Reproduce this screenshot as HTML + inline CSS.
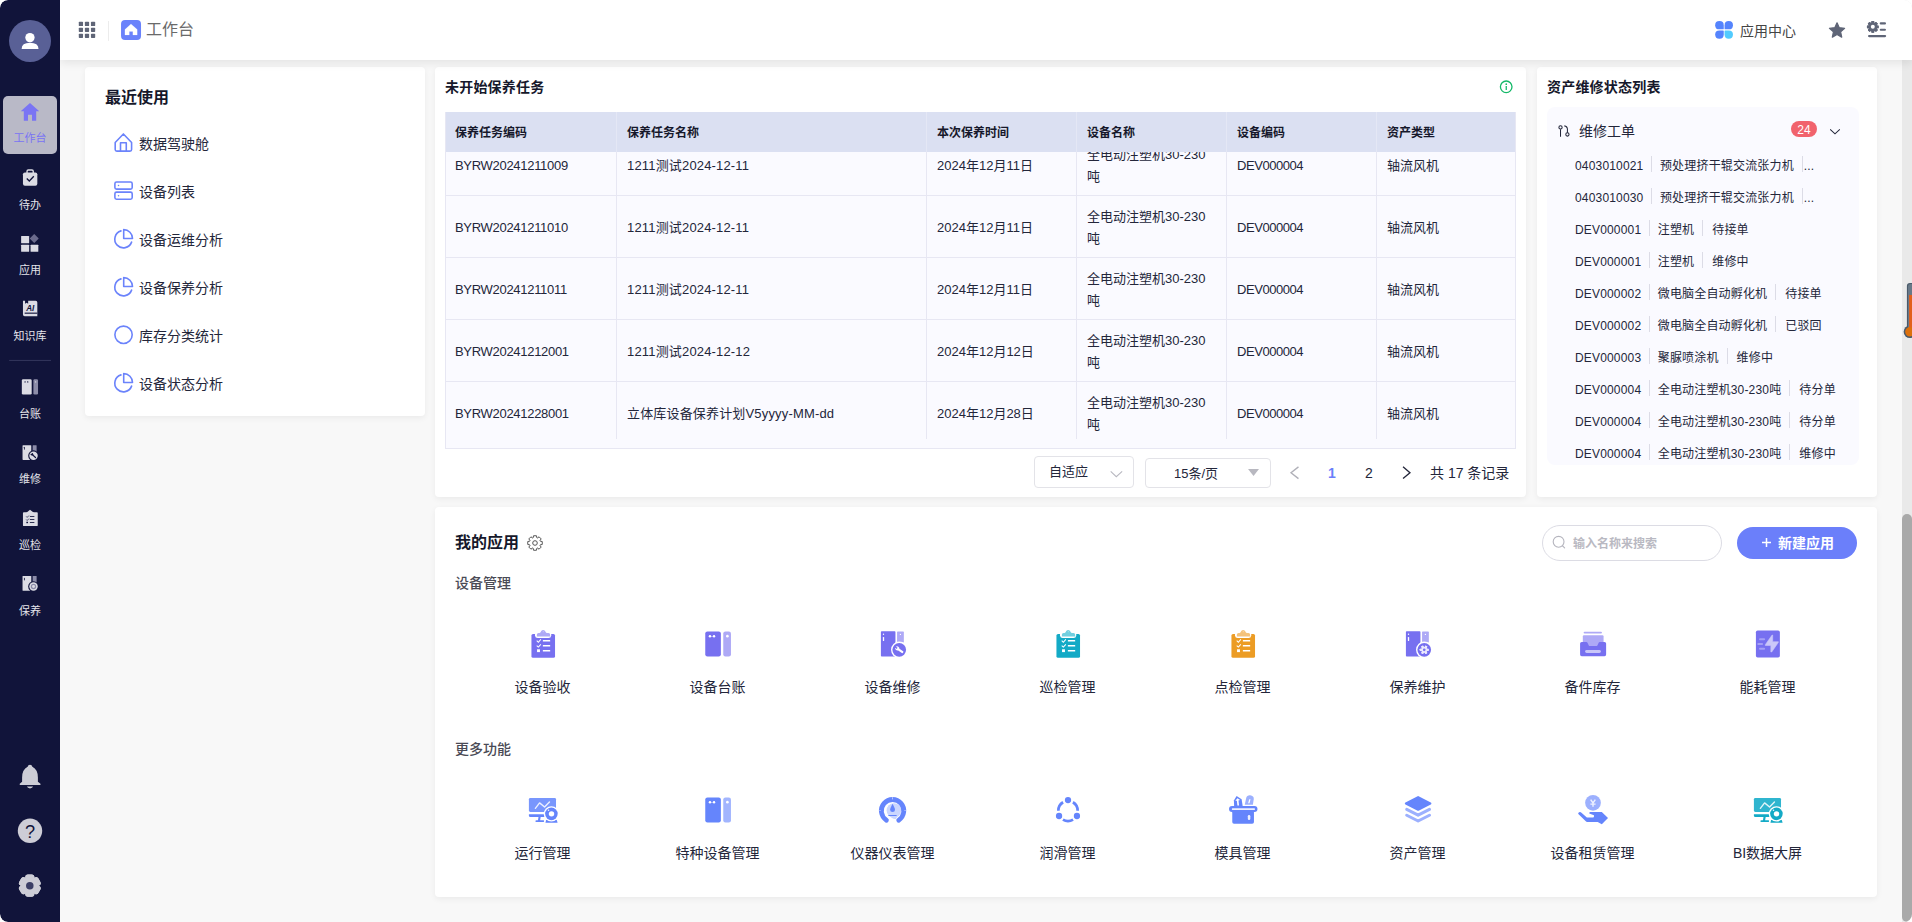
<!DOCTYPE html>
<html lang="zh-CN">
<head>
<meta charset="utf-8">
<title>工作台</title>
<style>
*{box-sizing:border-box;margin:0;padding:0}
html{background:#fff}
html,body{width:1912px;height:922px;overflow:hidden}
body{background:#f8f8f8;border-radius:8px}
body{font-family:"Liberation Sans","Noto Sans CJK SC",sans-serif;font-size:13px;color:#1d2033;position:relative}
.abs{position:absolute}
body>svg{z-index:10}
/* sidebar */
#side{z-index:6;position:absolute;left:0;top:0;width:60px;height:922px;background:#11143a;border-radius:8px 0 0 8px}
#avatar{position:absolute;left:9px;top:20px;width:42px;height:42px;border-radius:50%;background:#596096}
.nav{position:absolute;left:3px;width:54px;height:58px;border-radius:5px;text-align:center;color:#e4e4ea;font-size:12px}
.nav.act{background:#b9b9c7;color:#7a74f4}
.nav svg{position:absolute;left:16px;top:5px;width:22px;height:22px}
.nav span{position:absolute;left:0;right:0;top:34px;line-height:16px;font-size:11px}
#sep{position:absolute;left:9px;top:360px;width:42px;height:1px;background:#2f3258}
.bicon{position:absolute;left:18px;width:24px;height:24px}
/* top bar */
#top{z-index:5;position:absolute;left:60px;top:0;width:1852px;height:60px;background:#fff;box-shadow:0 3px 10px rgba(0,0,0,.085);border-radius:0 8px 0 0}
#top .title{position:absolute;left:86px;top:19px;font-size:16px;line-height:22px;color:#6a6a6a}
#top .appc{position:absolute;left:1680px;top:21px;font-size:14px;line-height:20px;color:#444}
/* scrollbar */
#sbtrack{position:absolute;left:1902px;top:60px;width:10px;height:862px;background:#e9e9e9}
#sbthumb{position:absolute;left:1902px;top:514px;width:10px;height:408px;background:#a9a9a9;border-radius:5px}
/* cards */
.card{position:absolute;background:#fff;border-radius:4px;box-shadow:0 2px 6px rgba(0,0,0,.06)}
#c1{left:85px;top:67px;width:340px;height:349px}
#c2{left:435px;top:67px;width:1091px;height:430px}
#c3{left:1537px;top:67px;width:340px;height:430px}
#c4{left:435px;top:507px;width:1442px;height:390px}
.h16{position:absolute;font-size:16px;font-weight:bold;line-height:22px;color:#16182b}
.h14{position:absolute;font-size:14px;font-weight:bold;line-height:20px;color:#16182b;letter-spacing:0.2px}
.recent{position:absolute;left:54px;font-size:14px;line-height:20px;color:#23263a}
.ricon{position:absolute;left:27px;width:22px;height:22px}
/* table */
#tbl{position:absolute;left:10px;top:45px;width:1071px;height:337px;border:1px solid #e7e7f3;border-top:none;background:#fafaff;overflow:hidden}
#thead{position:absolute;left:0;top:0;width:1071px;height:40px;background:#dbe0f2}
#thead div{position:absolute;top:0;height:40px;line-height:42px;padding-left:10px;font-weight:bold;font-size:12px;color:#16182b;border-left:1px solid #e4e7f5}
#thead div:first-child{border-left:none;padding-left:10px;left:-1px;width:172px}
#tbody{position:absolute;left:0;top:40px;width:1071px;height:287px;overflow:hidden}
.tr{position:absolute;left:0;width:1071px;height:62px;border-bottom:1px solid #e7e7f3}
.td{position:absolute;top:0;height:62px;padding-left:10px;font-size:13px;color:#23263a;border-left:1px solid #e7e7f3;display:flex;align-items:center;line-height:22px;padding-top:2px}
.td:first-child{border-left:none;padding-left:9px}
.c0{left:0;width:171px}.c1{left:170px;width:311px}.c2{left:480px;width:151px}.c3{left:630px;width:151px}.c4{left:780px;width:151px}.c5{left:930px;width:141px}
/* pager */
.pbox{position:absolute;border:1px solid #e3e3e8;border-radius:4px;background:#fff;font-size:13px;color:#23263a}
/* right list */
#rp{position:absolute;left:10px;top:40px;width:312px;height:358px;background:#fafaff;border-radius:8px;overflow:hidden}
.li{position:absolute;left:28px;height:20px;line-height:22px;font-size:12px;color:#23263a;white-space:nowrap;letter-spacing:.17px}
.li i{display:inline-block;width:1px;height:16px;background:#dcdce6;vertical-align:middle;margin:0 8px 0 7.5px;position:relative;top:-3px}
.li i+i,.li i.b{margin:0 9px 0 8px}
.li i.e{margin:0 1px 0 8px}
/* apps */
.sub{position:absolute;left:20px;font-size:14px;line-height:20px;color:#4a4a55;font-weight:500}
.app{position:absolute;width:175px;text-align:center;font-size:14px;line-height:20px;color:#23263a}
.app svg{position:absolute;left:71px;top:0;width:34px;height:34px}
.app span{position:absolute;left:0;right:0;top:50px}
</style>
</head>
<body>
<div id="sbtrack"></div>
<div id="sbthumb"></div>
<div id="top">
  <div class="title">工作台</div>
  <div class="appc">应用中心</div>
</div>
<div id="side">
  <div id="avatar"></div>
  <div class="nav act" style="top:96px"><span>工作台</span></div>
  <div class="nav" style="top:163px"><span>待办</span></div>
  <div class="nav" style="top:228px"><span>应用</span></div>
  <div class="nav" style="top:294px"><span>知识库</span></div>
  <div class="nav" style="top:372px"><span>台账</span></div>
  <div class="nav" style="top:437px"><span>维修</span></div>
  <div class="nav" style="top:503px"><span>巡检</span></div>
  <div class="nav" style="top:569px"><span>保养</span></div>
</div>

<div class="card" id="c1">
  <div class="h16" style="left:20px;top:20px">最近使用</div>
  <div class="recent" style="top:67px">数据驾驶舱</div>
  <div class="recent" style="top:115px">设备列表</div>
  <div class="recent" style="top:163px">设备运维分析</div>
  <div class="recent" style="top:211px">设备保养分析</div>
  <div class="recent" style="top:259px">库存分类统计</div>
  <div class="recent" style="top:307px">设备状态分析</div>
</div>

<div class="card" id="c2">
  <div class="h14" style="left:10px;top:10px">未开始保养任务</div>
  <div id="tbl">
    <div id="tbody">
      <div class="tr" style="top:-18px"><div class="td c0" style="letter-spacing:-0.3px">BYRW20241211009</div><div class="td c1" style="letter-spacing:.17px">1211测试2024-12-11</div><div class="td c2">2024年12月11日</div><div class="td c3"><span>全电动注塑机30-230<br>吨</span></div><div class="td c4" style="letter-spacing:-0.45px">DEV000004</div><div class="td c5">轴流风机</div></div>
      <div class="tr" style="top:44px"><div class="td c0" style="letter-spacing:-0.3px">BYRW20241211010</div><div class="td c1" style="letter-spacing:.17px">1211测试2024-12-11</div><div class="td c2">2024年12月11日</div><div class="td c3"><span>全电动注塑机30-230<br>吨</span></div><div class="td c4" style="letter-spacing:-0.45px">DEV000004</div><div class="td c5">轴流风机</div></div>
      <div class="tr" style="top:106px"><div class="td c0" style="letter-spacing:-0.3px">BYRW20241211011</div><div class="td c1" style="letter-spacing:.17px">1211测试2024-12-11</div><div class="td c2">2024年12月11日</div><div class="td c3"><span>全电动注塑机30-230<br>吨</span></div><div class="td c4" style="letter-spacing:-0.45px">DEV000004</div><div class="td c5">轴流风机</div></div>
      <div class="tr" style="top:168px"><div class="td c0" style="letter-spacing:-0.3px">BYRW20241212001</div><div class="td c1" style="letter-spacing:.17px">1211测试2024-12-12</div><div class="td c2">2024年12月12日</div><div class="td c3"><span>全电动注塑机30-230<br>吨</span></div><div class="td c4" style="letter-spacing:-0.45px">DEV000004</div><div class="td c5">轴流风机</div></div>
      <div class="tr" style="top:230px"><div class="td c0" style="letter-spacing:-0.3px">BYRW20241228001</div><div class="td c1" style="letter-spacing:.17px">立体库设备保养计划V5yyyy-MM-dd</div><div class="td c2">2024年12月28日</div><div class="td c3"><span>全电动注塑机30-230<br>吨</span></div><div class="td c4" style="letter-spacing:-0.45px">DEV000004</div><div class="td c5">轴流风机</div></div>
    </div>
    <div id="thead"><div class="c0">保养任务编码</div><div class="c1">保养任务名称</div><div class="c2">本次保养时间</div><div class="c3">设备名称</div><div class="c4">设备编码</div><div class="c5">资产类型</div></div>
  </div>
  <div class="pbox" style="left:599px;top:389px;width:100px;height:32px;line-height:30px;padding-left:14px">自适应</div>
  <div class="pbox" style="left:710px;top:391px;width:126px;height:30px;line-height:30px;padding-left:28px">15条/页</div>
  <div class="abs" style="left:893px;top:396px;font-size:14px;line-height:20px;font-weight:bold;color:#6b7ffa">1</div>
  <div class="abs" style="left:930px;top:396px;font-size:14px;line-height:20px;color:#23263a">2</div>
  <div class="abs" style="left:995px;top:396px;font-size:14px;line-height:20px;color:#23263a">共 17 条记录</div>
</div>

<div class="card" id="c3">
  <div class="h14" style="left:10px;top:10px">资产维修状态列表</div>
  <div id="rp">
    <div class="abs" style="left:32px;top:14px;font-size:14px;line-height:20px;color:#23263a">维修工单</div>
    <div class="abs" style="left:244px;top:14px;width:26px;height:16px;border-radius:8px;background:#f1636d;color:#fff;font-size:12px;line-height:18px;text-align:center">24</div>
    <div class="li" style="top:48px">0403010021<i></i>预处理挤干辊交流张力机<i class="e"></i>...</div>
    <div class="li" style="top:80px">0403010030<i></i>预处理挤干辊交流张力机<i class="e"></i>...</div>
    <div class="li" style="top:112px">DEV000001<i></i>注塑机<i class="b"></i>待接单</div>
    <div class="li" style="top:144px">DEV000001<i></i>注塑机<i class="b"></i>维修中</div>
    <div class="li" style="top:176px">DEV000002<i></i>微电脑全自动孵化机<i class="b"></i>待接单</div>
    <div class="li" style="top:208px">DEV000002<i></i>微电脑全自动孵化机<i class="b"></i>已驳回</div>
    <div class="li" style="top:240px">DEV000003<i></i>聚脲喷涂机<i class="b"></i>维修中</div>
    <div class="li" style="top:272px">DEV000004<i></i>全电动注塑机30-230吨<i class="b"></i>待分单</div>
    <div class="li" style="top:304px">DEV000004<i></i>全电动注塑机30-230吨<i class="b"></i>待分单</div>
    <div class="li" style="top:336px">DEV000004<i></i>全电动注塑机30-230吨<i class="b"></i>维修中</div>
  </div>
</div>

<div class="card" id="c4">
  <div class="h16" style="left:20px;top:25px">我的应用</div>
  <div class="abs" style="left:1107px;top:18px;width:180px;height:36px;border:1px solid #dcdce4;border-radius:18px;font-size:12px;line-height:36px;padding-left:30px;color:#b9b9c2;font-weight:bold">输入名称来搜索</div>
  <div class="abs" style="left:1302px;top:20px;width:120px;height:32px;border-radius:16px;background:#6b7ffa;color:#fff;font-size:14px;font-weight:bold;line-height:32px;padding-left:41px">新建应用</div>
  <div class="sub" style="top:66px">设备管理</div>
  <div class="app" style="left:20px;top:120px"><span>设备验收</span></div>
  <div class="app" style="left:195px;top:120px"><span>设备台账</span></div>
  <div class="app" style="left:370px;top:120px"><span>设备维修</span></div>
  <div class="app" style="left:545px;top:120px"><span>巡检管理</span></div>
  <div class="app" style="left:720px;top:120px"><span>点检管理</span></div>
  <div class="app" style="left:895px;top:120px"><span>保养维护</span></div>
  <div class="app" style="left:1070px;top:120px"><span>备件库存</span></div>
  <div class="app" style="left:1245px;top:120px"><span>能耗管理</span></div>
  <div class="sub" style="top:232px">更多功能</div>
  <div class="app" style="left:20px;top:286px"><span>运行管理</span></div>
  <div class="app" style="left:195px;top:286px"><span>特种设备管理</span></div>
  <div class="app" style="left:370px;top:286px"><span>仪器仪表管理</span></div>
  <div class="app" style="left:545px;top:286px"><span>润滑管理</span></div>
  <div class="app" style="left:720px;top:286px"><span>模具管理</span></div>
  <div class="app" style="left:895px;top:286px"><span>资产管理</span></div>
  <div class="app" style="left:1070px;top:286px"><span>设备租赁管理</span></div>
  <div class="app" style="left:1245px;top:286px"><span>BI数据大屏</span></div>
</div>
<svg style="position:absolute;left:513px;top:620px" width="60" height="50" viewBox="0 0 1106 922"><rect x="340" y="258" width="435" height="440" rx="30" fill="#7770f0"/>
<path d="M405 250 L405 285 Q410 332 455 332 L655 332 Q700 332 705 285 L705 250 Z" fill="#fff"/>
<path d="M440 302 L440 270 Q440 245 470 240 L488 238 Q500 236 508 224 L524 200 Q555 165 588 200 L604 224 Q612 236 624 238 L655 240 Q685 245 685 270 L685 302 Z" fill="#aea9f6"/>
<circle cx="558" cy="215" r="9" fill="#fff" opacity=".7"/>
<path d="M437 382 L467 410 L513 358 M437 472 L467 500 L513 448" fill="none" stroke="#fff" stroke-width="19"/>
<rect x="443" y="540" width="54" height="52" fill="#fff"/>
<rect x="550" y="370" width="136" height="28" rx="6" fill="#fff"/><rect x="550" y="460" width="136" height="28" rx="6" fill="#fff"/><rect x="550" y="553" width="136" height="28" rx="6" fill="#fff"/></svg>
<svg style="position:absolute;left:688px;top:620px" width="60" height="50" viewBox="0 0 1106 922"><rect x="318" y="210" width="288" height="462" rx="40" fill="#7770f0"/>
<rect x="650" y="210" width="142" height="462" rx="40" fill="#aea9f6"/>
<circle cx="405" cy="300" r="22" fill="#fff"/><circle cx="480" cy="300" r="22" fill="#fff"/><rect x="405" y="294" width="75" height="10" fill="#fff" opacity=".6"/>
<circle cx="726" cy="298" r="24" fill="#fff"/></svg>
<svg style="position:absolute;left:863px;top:620px" width="60" height="50" viewBox="0 0 1106 922"><rect x="330" y="207" width="268" height="465" rx="14" fill="#7770f0"/>
<rect x="628" y="212" width="125" height="205" rx="12" fill="#aea9f6"/>
<circle cx="378" cy="264" r="13" fill="#fff"/><rect x="366" y="312" width="24" height="74" rx="10" fill="#fff"/>
<circle cx="690" cy="266" r="12" fill="#fff"/>
<circle cx="668" cy="550" r="152" fill="#fff"/>
<circle cx="668" cy="550" r="126" fill="#7770f0"/><g transform="translate(668 550) rotate(-55)"><circle cx="0" cy="-45" r="38" fill="#fff"/><rect x="-20" y="-40" width="40" height="128" rx="15" fill="#fff"/><rect x="-13" y="-92" width="26" height="44" fill="#7770f0"/></g></svg>
<svg style="position:absolute;left:1038px;top:620px" width="60" height="50" viewBox="0 0 1106 922"><rect x="340" y="258" width="435" height="440" rx="30" fill="#13aac6"/>
<path d="M405 250 L405 285 Q410 332 455 332 L655 332 Q700 332 705 285 L705 250 Z" fill="#fff"/>
<path d="M440 302 L440 270 Q440 245 470 240 L488 238 Q500 236 508 224 L524 200 Q555 165 588 200 L604 224 Q612 236 624 238 L655 240 Q685 245 685 270 L685 302 Z" fill="#71cfdf"/>
<circle cx="558" cy="215" r="9" fill="#fff" opacity=".7"/>
<path d="M437 382 L467 410 L513 358 M437 472 L467 500 L513 448" fill="none" stroke="#fff" stroke-width="19"/>
<rect x="443" y="540" width="54" height="52" fill="#fff"/>
<rect x="550" y="370" width="136" height="28" rx="6" fill="#fff"/><rect x="550" y="460" width="136" height="28" rx="6" fill="#fff"/><rect x="550" y="553" width="136" height="28" rx="6" fill="#fff"/></svg>
<svg style="position:absolute;left:1213px;top:620px" width="60" height="50" viewBox="0 0 1106 922"><rect x="340" y="258" width="435" height="440" rx="30" fill="#ec9c24"/>
<path d="M405 250 L405 285 Q410 332 455 332 L655 332 Q700 332 705 285 L705 250 Z" fill="#fff"/>
<path d="M440 302 L440 270 Q440 245 470 240 L488 238 Q500 236 508 224 L524 200 Q555 165 588 200 L604 224 Q612 236 624 238 L655 240 Q685 245 685 270 L685 302 Z" fill="#f4c27a"/>
<circle cx="558" cy="215" r="9" fill="#fff" opacity=".7"/>
<path d="M437 382 L467 410 L513 358 M437 472 L467 500 L513 448" fill="none" stroke="#fff" stroke-width="19"/>
<rect x="443" y="540" width="54" height="52" fill="#fff"/>
<rect x="550" y="370" width="136" height="28" rx="6" fill="#fff"/><rect x="550" y="460" width="136" height="28" rx="6" fill="#fff"/><rect x="550" y="553" width="136" height="28" rx="6" fill="#fff"/></svg>
<svg style="position:absolute;left:1388px;top:620px" width="60" height="50" viewBox="0 0 1106 922"><rect x="330" y="207" width="268" height="465" rx="14" fill="#7770f0"/>
<rect x="628" y="212" width="125" height="205" rx="12" fill="#aea9f6"/>
<circle cx="378" cy="264" r="13" fill="#fff"/><rect x="366" y="312" width="24" height="74" rx="10" fill="#fff"/>
<circle cx="690" cy="266" r="12" fill="#fff"/>
<circle cx="668" cy="550" r="152" fill="#fff"/>
<circle cx="668" cy="550" r="126" fill="#7770f0"/><rect x="648" y="468" width="40" height="164" rx="8" fill="#ebe9fd" transform="rotate(30 668 550)"/><rect x="648" y="468" width="40" height="164" rx="8" fill="#ebe9fd" transform="rotate(90 668 550)"/><rect x="648" y="468" width="40" height="164" rx="8" fill="#ebe9fd" transform="rotate(150 668 550)"/><rect x="648" y="468" width="40" height="164" rx="8" fill="#ebe9fd" transform="rotate(210 668 550)"/><rect x="648" y="468" width="40" height="164" rx="8" fill="#ebe9fd" transform="rotate(270 668 550)"/><rect x="648" y="468" width="40" height="164" rx="8" fill="#ebe9fd" transform="rotate(330 668 550)"/><circle cx="668" cy="550" r="54" fill="#ebe9fd"/><circle cx="668" cy="550" r="24" fill="#7770f0"/></svg>
<svg style="position:absolute;left:1563px;top:620px" width="60" height="50" viewBox="0 0 1106 922"><rect x="380" y="215" width="338" height="34" rx="17" fill="#aea9f6"/>
<rect x="365" y="282" width="383" height="230" rx="22" fill="#aea9f6"/>
<path d="M345 405 L430 405 Q445 405 452 420 L475 468 Q482 480 497 480 L612 480 Q627 480 634 468 L657 420 Q664 405 679 405 L765 405 Q795 405 795 435 L795 638 Q795 668 765 668 L345 668 Q315 668 315 638 L315 435 Q315 405 345 405 Z" fill="#7770f0"/>
<rect x="408" y="555" width="290" height="53" rx="26" fill="#c9c6f9"/></svg>
<svg style="position:absolute;left:1738px;top:620px" width="60" height="50" viewBox="0 0 1106 922"><rect x="330" y="195" width="442" height="495" rx="32" fill="#7770f0"/>
<path d="M628 278 L640 278 L640 400 L745 400 L745 412 L622 590 L605 590 L605 470 L503 470 L503 455 Z" fill="#cbc8f9" stroke="#cbc8f9" stroke-width="10" stroke-linejoin="round"/>
<rect x="387" y="335" width="113" height="40" rx="20" fill="#a5a0f5"/>
<rect x="355" y="423" width="108" height="40" rx="20" fill="#a5a0f5"/>
<rect x="387" y="510" width="113" height="40" rx="20" fill="#a5a0f5"/></svg>
<svg style="position:absolute;left:513px;top:785px" width="60" height="50" viewBox="0 0 1106 922"><rect x="293" y="238" width="500" height="258" rx="26" fill="#7896fd"/>
<path d="M293 540 L600 540 L600 590 L320 590 Q293 590 293 565 Z" fill="#6585fc"/>
<path d="M470 590 L510 590 L500 650 L570 650 L570 682 L430 682 Q410 682 412 665 Q415 650 435 650 L460 650 Z" fill="#6585fc"/>
<path d="M412 430 L490 330 L582 405 L672 312" fill="none" stroke="#fff" stroke-opacity=".85" stroke-width="26" stroke-linecap="round" stroke-linejoin="round"/>
<path d="M612 640 L805 640 L822 696 L598 696 Z" fill="#6585fc"/>
<circle cx="708" cy="532" r="142" fill="#fff"/>
<circle cx="708" cy="532" r="116" fill="#6585fc"/>
<circle cx="710" cy="532" r="50" fill="#fff"/>
<circle cx="655" cy="467" r="14" fill="#fff" opacity=".9"/></svg>
<svg style="position:absolute;left:688px;top:786px" width="60" height="50" viewBox="0 0 1106 922"><rect x="318" y="210" width="288" height="462" rx="40" fill="#6585fc"/>
<rect x="650" y="210" width="142" height="462" rx="40" fill="#a2b5fe"/>
<circle cx="405" cy="300" r="22" fill="#fff"/><circle cx="480" cy="300" r="22" fill="#fff"/><rect x="405" y="294" width="75" height="10" fill="#fff" opacity=".6"/>
<circle cx="726" cy="298" r="24" fill="#fff"/></svg>
<svg style="position:absolute;left:863px;top:785px" width="60" height="50" viewBox="0 0 1106 922"><circle cx="570" cy="470" r="135" fill="#cbd6fe"/>
<path d="M490 560 Q540 640 610 625 L640 560 Z" fill="#cbd6fe"/>
<path d="M432 648 A207 207 0 1 1 658 648" fill="none" stroke="#6585fc" stroke-width="88" stroke-linecap="round"/>
<path d="M545 345 Q500 430 500 455 A45 45 0 0 0 590 455 Q590 430 545 345 Z" fill="#6585fc"/>
<rect x="465" y="552" width="160" height="18" rx="9" fill="#6585fc"/>
<rect x="538" y="225" width="12" height="40" fill="#fff" opacity=".8"/>
<rect x="298" y="463" width="32" height="12" fill="#fff" opacity=".6"/><rect x="760" y="463" width="32" height="12" fill="#fff" opacity=".6"/></svg>
<svg style="position:absolute;left:1038px;top:785px" width="60" height="50" viewBox="0 0 1106 922"><circle cx="553" cy="278" r="58" fill="#6585fc"/><circle cx="388" cy="572" r="58" fill="#6585fc"/><circle cx="718" cy="572" r="58" fill="#6585fc"/>
<path d="M375 475 A180 180 0 0 1 462 318" fill="none" stroke="#6585fc" stroke-width="50"/>
<path d="M644 318 A180 180 0 0 1 731 475" fill="none" stroke="#6585fc" stroke-width="50"/>
<path d="M460 640 A180 180 0 0 0 646 640" fill="none" stroke="#6585fc" stroke-width="50"/></svg>
<svg style="position:absolute;left:1213px;top:785px" width="60" height="50" viewBox="0 0 1106 922"><rect x="355" y="470" width="400" height="245" rx="32" fill="#6585fc"/>
<rect x="295" y="388" width="525" height="112" rx="56" fill="#6585fc"/>
<rect x="348" y="428" width="425" height="34" rx="8" fill="#eef1ff"/>
<rect x="642" y="555" width="46" height="90" rx="22" fill="#eef1ff"/>
<path d="M390 395 L385 285 L435 205 L528 265 L548 395 Z" fill="#6585fc"/>
<path d="M412 290 L450 245 L500 278 L470 285 L480 380 L450 380 L440 290 Z" fill="#fff"/>
<path d="M585 365 L612 240 Q625 185 685 188 Q755 195 752 260 L735 365 Z" fill="#9cb0fe"/>
<path d="M668 262 L692 262 L672 335 L648 335 Z" fill="#fff"/></svg>
<svg style="position:absolute;left:1388px;top:785px" width="60" height="50" viewBox="0 0 1106 922"><path d="M345 450 L555 556 L765 450 M345 558 L555 664 L765 558" fill="none" stroke="#9cb0fe" stroke-width="56" stroke-linecap="round" stroke-linejoin="round"/>
<path d="M330 340 L555 225 L780 340 L555 455 Z" fill="#fff" stroke="#fff" stroke-width="90" stroke-linejoin="round"/>
<path d="M330 340 L555 225 L780 340 L555 455 Z" fill="#6585fc" stroke="#6585fc" stroke-width="40" stroke-linejoin="round"/></svg>
<svg style="position:absolute;left:1563px;top:785px" width="60" height="50" viewBox="0 0 1106 922"><circle cx="553" cy="328" r="145" fill="#9cb0fe"/>
<path d="M510 268 L553 330 L596 268 M553 330 L553 400 M505 352 L601 352" fill="none" stroke="#eef1ff" stroke-width="26"/>
<path d="M310 500 Q285 505 278 530 L420 670 Q430 680 445 680 L640 680 L715 722 L830 608 L715 500 L500 500 Q480 505 485 525 L570 560 Q580 590 560 598 L440 598 L340 510 Q325 498 310 500 Z" fill="#6585fc"/></svg>
<svg style="position:absolute;left:1738px;top:785px" width="60" height="50" viewBox="0 0 1106 922"><rect x="293" y="238" width="500" height="258" rx="26" fill="#2fb5cf"/>
<path d="M293 540 L600 540 L600 590 L320 590 Q293 590 293 565 Z" fill="#13aac6"/>
<path d="M470 590 L510 590 L500 650 L570 650 L570 682 L430 682 Q410 682 412 665 Q415 650 435 650 L460 650 Z" fill="#13aac6"/>
<path d="M412 430 L490 330 L582 405 L672 312" fill="none" stroke="#fff" stroke-opacity=".85" stroke-width="26" stroke-linecap="round" stroke-linejoin="round"/>
<path d="M612 640 L805 640 L822 696 L598 696 Z" fill="#13aac6"/>
<circle cx="708" cy="532" r="142" fill="#fff"/>
<circle cx="708" cy="532" r="116" fill="#13aac6"/>
<circle cx="710" cy="532" r="50" fill="#fff"/>
<circle cx="655" cy="467" r="14" fill="#fff" opacity=".9"/></svg>
<svg style="position:absolute;left:0px;top:90px" width="60" height="130" viewBox="0 0 426 923"><path d="M213 92 L279 151 L257 151 L257 218 L227 218 L227 175 L199 175 L199 218 L169 218 L169 151 L147 151 Z" fill="#7a74f4"/>
<rect x="163" y="585" width="102" height="95" rx="14" fill="#dcdce4"/>
<rect x="192" y="568" width="44" height="34" rx="9" fill="none" stroke="#dcdce4" stroke-width="10"/>
<rect x="186" y="590" width="56" height="14" fill="#dcdce4"/>
<path d="M190 628 L208 646 L240 612" fill="none" stroke="#11143a" stroke-width="9"/></svg>
<svg style="position:absolute;left:0px;top:225px" width="60" height="130" viewBox="0 0 426 923"><rect x="150" y="78" width="57" height="52" rx="4" fill="#dcdce4"/><rect x="150" y="140" width="57" height="50" rx="4" fill="#dcdce4"/><rect x="217" y="140" width="55" height="50" rx="4" fill="#dcdce4"/>
<rect x="220" y="73" width="46" height="46" rx="3" fill="#6b6b8c" transform="rotate(45 243 96)"/>
<path d="M163 538 L178 538 L178 560 L189 552 L200 560 L200 538 L253 538 Q265 538 265 550 L265 648 L175 648 Q163 648 163 636 Z" fill="#dcdce4"/>
<rect x="175" y="622" width="90" height="8" fill="#11143a"/>
<text x="215" y="612" font-family="Liberation Sans,sans-serif" font-weight="bold" font-style="italic" font-size="58" text-anchor="middle" fill="#11143a">AI</text></svg>
<svg style="position:absolute;left:0px;top:355px" width="60" height="130" viewBox="0 0 426 923"><rect x="65" y="35" width="297" height="6" fill="#3a3d63"/>
<rect x="155" y="172" width="70" height="108" rx="9" fill="#dcdce4"/><rect x="237" y="172" width="33" height="108" rx="9" fill="#8c8ca8"/>
<circle cx="178" cy="191" r="5" fill="#11143a"/><circle cx="197" cy="191" r="5" fill="#11143a"/><circle cx="253" cy="191" r="5" fill="#dcdce4"/>
<rect x="160" y="640" width="62" height="105" rx="4" fill="#dcdce4"/><rect x="232" y="640" width="28" height="55" rx="3" fill="#8c8ca8"/>
<rect x="170" y="652" width="6" height="20" rx="3" fill="#11143a"/>
<circle cx="238" cy="715" r="38" fill="#11143a"/><circle cx="238" cy="715" r="30" fill="#dcdce4"/>
<path d="M226 704 L252 728" fill="none" stroke="#11143a" stroke-width="9" stroke-linecap="round"/><circle cx="227" cy="705" r="9" fill="#11143a"/><circle cx="221" cy="699" r="4.5" fill="#dcdce4"/></svg>
<svg style="position:absolute;left:0px;top:495px" width="60" height="130" viewBox="0 0 426 923"><rect x="163" y="122" width="105" height="98" rx="6" fill="#dcdce4"/>
<path d="M185 128 L213 104 L243 128 Z" fill="#dcdce4"/>
<path d="M186 152 L193 159 L205 146 M186 174 L193 181 L205 168" fill="none" stroke="#11143a" stroke-width="5"/>
<rect x="187" y="190" width="12" height="10" fill="#11143a"/>
<rect x="212" y="149" width="32" height="6" fill="#11143a"/><rect x="212" y="171" width="32" height="6" fill="#11143a"/><rect x="212" y="192" width="32" height="6" fill="#11143a"/>
<rect x="160" y="575" width="62" height="105" rx="4" fill="#dcdce4"/><rect x="232" y="575" width="28" height="55" rx="3" fill="#8c8ca8"/>
<rect x="170" y="587" width="6" height="20" rx="3" fill="#11143a"/>
<circle cx="238" cy="650" r="38" fill="#11143a"/><circle cx="238" cy="650" r="30" fill="#dcdce4"/>
<circle cx="238" cy="650" r="15" fill="none" stroke="#8c8ca8" stroke-width="9"/></svg>
<svg style="position:absolute;left:0px;top:740px" width="120" height="182" viewBox="0 0 608 922"><path d="M152 125 Q162 125 164 136 Q192 150 192 190 L192 212 L205 222 L205 228 L100 228 L100 222 L112 212 L112 190 Q112 150 140 136 Q142 125 152 125 Z" fill="#cdcdd6"/>
<path d="M136 236 A17 14 0 0 0 168 236 Z" fill="#cdcdd6"/>
<circle cx="152" cy="460" r="62" fill="#cdcdd6"/>
<text x="152" y="494" font-family="Liberation Sans,sans-serif" font-size="92" text-anchor="middle" fill="#11143a">?</text><rect x="128" y="682" width="46" height="112" rx="14" fill="#cdcdd6" transform="rotate(0 151 738)"/><rect x="128" y="682" width="46" height="112" rx="14" fill="#cdcdd6" transform="rotate(60 151 738)"/><rect x="128" y="682" width="46" height="112" rx="14" fill="#cdcdd6" transform="rotate(120 151 738)"/><rect x="128" y="682" width="46" height="112" rx="14" fill="#cdcdd6" transform="rotate(180 151 738)"/><rect x="128" y="682" width="46" height="112" rx="14" fill="#cdcdd6" transform="rotate(240 151 738)"/><rect x="128" y="682" width="46" height="112" rx="14" fill="#cdcdd6" transform="rotate(300 151 738)"/><circle cx="151" cy="738" r="42" fill="#cdcdd6"/><circle cx="151" cy="738" r="19" fill="#3c3f66"/></svg>
<svg style="position:absolute;left:0px;top:0px" width="240" height="116" viewBox="0 0 1908 922"><circle cx="238" cy="299" r="37" fill="#fff"/><path d="M172 390 Q172 340 238 340 Q306 340 306 390 Z" fill="#fff"/></svg>
<svg style="position:absolute;left:70px;top:10px" width="140" height="40" viewBox="0 0 1912 546"><rect x="120" y="162" width="58" height="58" rx="10" fill="#5f6577"/><rect x="203" y="162" width="58" height="58" rx="10" fill="#5f6577"/><rect x="286" y="162" width="58" height="58" rx="10" fill="#5f6577"/><rect x="120" y="243" width="58" height="58" rx="10" fill="#5f6577"/><rect x="203" y="243" width="58" height="58" rx="10" fill="#5f6577"/><rect x="286" y="243" width="58" height="58" rx="10" fill="#5f6577"/><rect x="120" y="325" width="58" height="58" rx="10" fill="#5f6577"/><rect x="203" y="325" width="58" height="58" rx="10" fill="#5f6577"/><rect x="286" y="325" width="58" height="58" rx="10" fill="#5f6577"/><rect x="521" y="150" width="8" height="272" fill="#dfdfdf"/><rect x="697" y="135" width="273" height="275" rx="55" fill="#6a82fb"/><path d="M833 190 L918 265 L918 342 L858 342 L858 292 L810 292 L810 342 L750 342 L750 265 Z" fill="#fff" stroke="#fff" stroke-width="2" stroke-linejoin="round"/></svg>
<svg style="position:absolute;left:1700px;top:10px" width="200" height="40" viewBox="0 0 1912 382"><path d="M185 105 L187 105 Q227 105 227 145 L227 179 Q227 185 221 185 L185 185 Q145 185 145 145 L145 145 Q145 105 185 105 Z" fill="#5584fd"/><path d="M275 105 L275 105 Q315 105 315 145 L315 145 Q315 185 275 185 L241 185 Q235 185 235 179 L235 145 Q235 105 275 105 Z" fill="#5584fd"/><path d="M185 195 L221 195 Q227 195 227 201 L227 235 Q227 275 187 275 L185 275 Q145 275 145 235 L145 235 Q145 195 185 195 Z" fill="#5584fd"/><path d="M241 195 L275 195 Q315 195 315 235 L315 235 Q315 275 275 275 L275 275 Q235 275 235 235 L235 201 Q235 195 241 195 Z" fill="#52cbfe"/><polygon points="1310.0,122.0 1331.2,168.9 1382.3,174.5 1344.2,209.1 1354.7,259.5 1310.0,234.0 1265.3,259.5 1275.8,209.1 1237.7,174.5 1288.8,168.9" fill="#5f6577" stroke="#5f6577" stroke-width="12" stroke-linejoin="round"/><rect x="1638" y="105" width="28" height="112" rx="6" fill="#5f6577" transform="rotate(0 1652 161)"/><rect x="1638" y="105" width="28" height="112" rx="6" fill="#5f6577" transform="rotate(45 1652 161)"/><rect x="1638" y="105" width="28" height="112" rx="6" fill="#5f6577" transform="rotate(90 1652 161)"/><rect x="1638" y="105" width="28" height="112" rx="6" fill="#5f6577" transform="rotate(135 1652 161)"/><rect x="1638" y="105" width="28" height="112" rx="6" fill="#5f6577" transform="rotate(180 1652 161)"/><rect x="1638" y="105" width="28" height="112" rx="6" fill="#5f6577" transform="rotate(225 1652 161)"/><rect x="1638" y="105" width="28" height="112" rx="6" fill="#5f6577" transform="rotate(270 1652 161)"/><rect x="1638" y="105" width="28" height="112" rx="6" fill="#5f6577" transform="rotate(315 1652 161)"/><circle cx="1652" cy="161" r="42" fill="#5f6577"/><circle cx="1652" cy="161" r="19" fill="#fff"/><rect x="1718" y="118" width="60" height="20" rx="10" fill="#5f6577"/><rect x="1718" y="178" width="60" height="20" rx="10" fill="#5f6577"/><rect x="1606" y="238" width="174" height="22" rx="11" fill="#5f6577"/></svg>
<svg style="position:absolute;left:100px;top:120px" width="140" height="46" viewBox="0 0 922 303"><path d="M100 148 L154 92 L208 148 L208 194 Q208 205 197 205 L111 205 Q100 205 100 194 Z M135 205 L135 150 L173 150 L173 205" fill="none" stroke="#6b83fb" stroke-width="10.5" stroke-linejoin="round" stroke-linecap="round"/></svg>
<svg style="position:absolute;left:100px;top:168px" width="140" height="46" viewBox="0 0 922 303"><rect x="98" y="92" width="114" height="47" rx="11" fill="none" stroke="#6b83fb" stroke-width="10.5" stroke-linejoin="round" stroke-linecap="round"/><rect x="98" y="159" width="114" height="47" rx="11" fill="none" stroke="#6b83fb" stroke-width="10.5" stroke-linejoin="round" stroke-linecap="round"/><circle cx="122" cy="116" r="5" fill="#6b83fb"/><circle cx="122" cy="183" r="5" fill="#6b83fb"/></svg>
<svg style="position:absolute;left:100px;top:216px" width="140" height="46" viewBox="0 0 922 303"><path d="M156 90 A58 58 0 0 1 214 148 L156 148 Z" fill="none" stroke="#6b83fb" stroke-width="10.5" stroke-linejoin="round" stroke-linecap="round"/><path d="M138 98 A57 57 0 1 0 208 172" fill="none" stroke="#6b83fb" stroke-width="10.5" stroke-linejoin="round" stroke-linecap="round"/></svg>
<svg style="position:absolute;left:100px;top:264px" width="140" height="46" viewBox="0 0 922 303"><path d="M156 90 A58 58 0 0 1 214 148 L156 148 Z" fill="none" stroke="#6b83fb" stroke-width="10.5" stroke-linejoin="round" stroke-linecap="round"/><path d="M138 98 A57 57 0 1 0 208 172" fill="none" stroke="#6b83fb" stroke-width="10.5" stroke-linejoin="round" stroke-linecap="round"/></svg>
<svg style="position:absolute;left:100px;top:312px" width="140" height="46" viewBox="0 0 922 303"><circle cx="155" cy="150" r="57" fill="none" stroke="#6b83fb" stroke-width="10.5" stroke-linejoin="round" stroke-linecap="round"/></svg>
<svg style="position:absolute;left:100px;top:360px" width="140" height="46" viewBox="0 0 922 303"><path d="M156 90 A58 58 0 0 1 214 148 L156 148 Z" fill="none" stroke="#6b83fb" stroke-width="10.5" stroke-linejoin="round" stroke-linecap="round"/><path d="M138 98 A57 57 0 1 0 208 172" fill="none" stroke="#6b83fb" stroke-width="10.5" stroke-linejoin="round" stroke-linecap="round"/></svg>
<svg style="position:absolute;left:1498px;top:79px" width="16" height="16" viewBox="0 0 16 16"><circle cx="8.2" cy="7.8" r="5.8" fill="none" stroke="#14b868" stroke-width="1.3"/><rect x="7.6" y="7" width="1.3" height="4" fill="#14b868"/><circle cx="8.25" cy="5.2" r=".85" fill="#14b868"/></svg>
<svg style="position:absolute;left:524.7px;top:533px" width="20" height="20" viewBox="0 0 20 20"><polygon points="17.25,8.53 17.25,11.47 15.30,11.81 15.03,12.46 16.17,14.09 14.09,16.17 12.46,15.03 11.81,15.30 11.47,17.25 8.53,17.25 8.19,15.30 7.54,15.03 5.91,16.17 3.83,14.09 4.97,12.46 4.70,11.81 2.75,11.47 2.75,8.53 4.70,8.19 4.97,7.54 3.83,5.91 5.91,3.83 7.54,4.97 8.19,4.70 8.53,2.75 11.47,2.75 11.81,4.70 12.46,4.97 14.09,3.83 16.17,5.91 15.03,7.54 15.30,8.19" fill="none" stroke="#555" stroke-width="1" stroke-linejoin="round"/><circle cx="10" cy="10" r="2.3" fill="none" stroke="#555" stroke-width="1"/></svg>
<svg style="position:absolute;left:1551px;top:534px" width="16" height="16" viewBox="0 0 16 16"><circle cx="7.6" cy="7.8" r="5.4" fill="none" stroke="#b5b5be" stroke-width="1.1"/><path d="M11.6 11.8 L13.6 13.8" stroke="#b5b5be" stroke-width="1.2" stroke-linecap="round"/></svg>
<svg style="position:absolute;left:1761px;top:537px" width="11" height="11" viewBox="0 0 11 11"><path d="M5.5 1 V10 M1 5.5 H10" stroke="#fff" stroke-width="1.5"/></svg>
<svg style="position:absolute;left:1020px;top:450px" width="510" height="50" viewBox="0 0 1912 187"><path d="M340 80 L361 100 L383 80" fill="none" stroke="#b8b8c0" stroke-width="4"/>
<path d="M855 71 L896 71 L875.5 97 Z" fill="#b8b8c0"/>
<path d="M1044 63 L1016 85 L1044 107" fill="none" stroke="#b0b0b8" stroke-width="5"/>
<path d="M1436 63 L1462 85 L1436 107" fill="none" stroke="#23263a" stroke-width="5"/></svg>
<svg style="position:absolute;left:1540px;top:110px" width="330" height="70" viewBox="0 0 1912 406"><circle cx="118" cy="101" r="9.5" fill="none" stroke="#23263a" stroke-width="6"/><path d="M118 111 L118 155" stroke="#23263a" stroke-width="6"/>
<circle cx="158" cy="142" r="9.5" fill="none" stroke="#23263a" stroke-width="6"/><path d="M140 92 Q158 94 158 112 L158 132" fill="none" stroke="#23263a" stroke-width="6"/>
<path d="M1682 112 L1710 138 L1738 112" fill="none" stroke="#23263a" stroke-width="6"/></svg>
<svg style="position:absolute;left:1872px;top:260px" width="40" height="100" viewBox="0 0 369 922"><rect x="322" y="212" width="70" height="460" rx="28" fill="#4a5a6a"/><circle cx="350" cy="662" r="58" fill="#4a5a6a"/>
<rect x="332" y="222" width="60" height="440" rx="22" fill="#687887"/>
<rect x="342" y="322" width="40" height="330" fill="#e2601c"/><circle cx="350" cy="662" r="44" fill="#dd700c"/></svg>

</body>
</html>
